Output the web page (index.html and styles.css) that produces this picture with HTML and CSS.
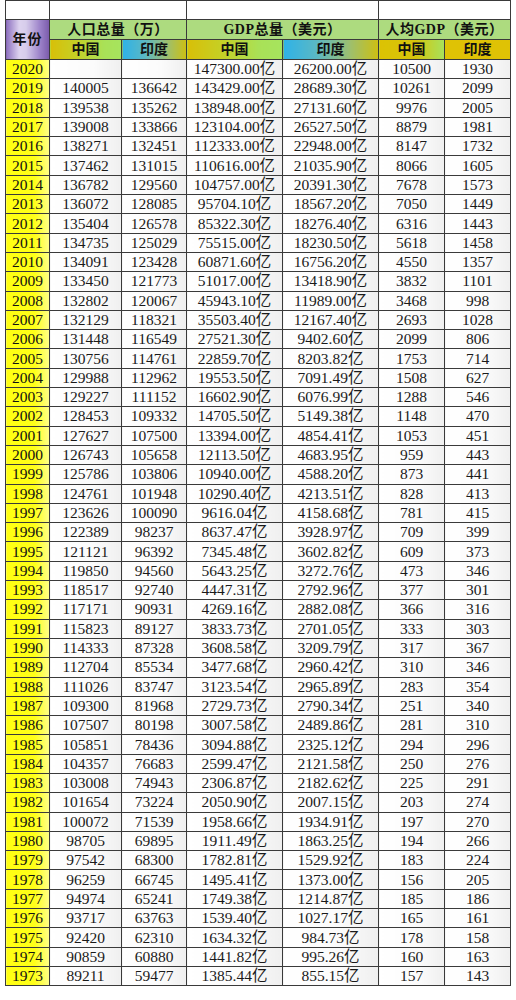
FILE: index.html
```html
<!DOCTYPE html>
<html lang="zh-CN">
<head>
<meta charset="utf-8">
<title>中国与印度人口及GDP对比</title>
<link rel="stylesheet" href="styles.css">
</head>
<body>
<table class="data">
<colgroup>
<col class="c-year"><col class="c-pop1"><col class="c-pop2"><col class="c-gdp"><col class="c-gdp"><col class="c-pc"><col class="c-pc">
</colgroup>
<thead>
<tr class="blank"><td></td><td colspan="2"></td><td colspan="2"></td><td colspan="2"></td></tr>
<tr class="h1"><th rowspan="2" class="year-head">年份</th><th colspan="2" class="grp">人口总量（万）</th><th colspan="2" class="grp">GDP总量（美元）</th><th colspan="2" class="grp">人均GDP（美元）</th></tr>
<tr class="h2"><th class="cn">中国</th><th class="in">印度</th><th class="cn">中国</th><th class="in">印度</th><th class="cn2">中国</th><th class="in2">印度</th></tr>
</thead>
<tbody>
<tr><td class="y">2020</td><td></td><td></td><td>147300.00亿</td><td>26200.00亿</td><td>10500</td><td>1930</td></tr>
<tr><td class="y">2019</td><td>140005</td><td>136642</td><td>143429.00亿</td><td>28689.30亿</td><td>10261</td><td>2099</td></tr>
<tr><td class="y">2018</td><td>139538</td><td>135262</td><td>138948.00亿</td><td>27131.60亿</td><td>9976</td><td>2005</td></tr>
<tr><td class="y">2017</td><td>139008</td><td>133866</td><td>123104.00亿</td><td>26527.50亿</td><td>8879</td><td>1981</td></tr>
<tr><td class="y">2016</td><td>138271</td><td>132451</td><td>112333.00亿</td><td>22948.00亿</td><td>8147</td><td>1732</td></tr>
<tr><td class="y">2015</td><td>137462</td><td>131015</td><td>110616.00亿</td><td>21035.90亿</td><td>8066</td><td>1605</td></tr>
<tr><td class="y">2014</td><td>136782</td><td>129560</td><td>104757.00亿</td><td>20391.30亿</td><td>7678</td><td>1573</td></tr>
<tr><td class="y">2013</td><td>136072</td><td>128085</td><td>95704.10亿</td><td>18567.20亿</td><td>7050</td><td>1449</td></tr>
<tr><td class="y">2012</td><td>135404</td><td>126578</td><td>85322.30亿</td><td>18276.40亿</td><td>6316</td><td>1443</td></tr>
<tr><td class="y">2011</td><td>134735</td><td>125029</td><td>75515.00亿</td><td>18230.50亿</td><td>5618</td><td>1458</td></tr>
<tr><td class="y">2010</td><td>134091</td><td>123428</td><td>60871.60亿</td><td>16756.20亿</td><td>4550</td><td>1357</td></tr>
<tr><td class="y">2009</td><td>133450</td><td>121773</td><td>51017.00亿</td><td>13418.90亿</td><td>3832</td><td>1101</td></tr>
<tr><td class="y">2008</td><td>132802</td><td>120067</td><td>45943.10亿</td><td>11989.00亿</td><td>3468</td><td>998</td></tr>
<tr><td class="y">2007</td><td>132129</td><td>118321</td><td>35503.40亿</td><td>12167.40亿</td><td>2693</td><td>1028</td></tr>
<tr><td class="y">2006</td><td>131448</td><td>116549</td><td>27521.30亿</td><td>9402.60亿</td><td>2099</td><td>806</td></tr>
<tr><td class="y">2005</td><td>130756</td><td>114761</td><td>22859.70亿</td><td>8203.82亿</td><td>1753</td><td>714</td></tr>
<tr><td class="y">2004</td><td>129988</td><td>112962</td><td>19553.50亿</td><td>7091.49亿</td><td>1508</td><td>627</td></tr>
<tr><td class="y">2003</td><td>129227</td><td>111152</td><td>16602.90亿</td><td>6076.99亿</td><td>1288</td><td>546</td></tr>
<tr><td class="y">2002</td><td>128453</td><td>109332</td><td>14705.50亿</td><td>5149.38亿</td><td>1148</td><td>470</td></tr>
<tr><td class="y">2001</td><td>127627</td><td>107500</td><td>13394.00亿</td><td>4854.41亿</td><td>1053</td><td>451</td></tr>
<tr><td class="y">2000</td><td>126743</td><td>105658</td><td>12113.50亿</td><td>4683.95亿</td><td>959</td><td>443</td></tr>
<tr><td class="y">1999</td><td>125786</td><td>103806</td><td>10940.00亿</td><td>4588.20亿</td><td>873</td><td>441</td></tr>
<tr><td class="y">1998</td><td>124761</td><td>101948</td><td>10290.40亿</td><td>4213.51亿</td><td>828</td><td>413</td></tr>
<tr><td class="y">1997</td><td>123626</td><td>100090</td><td>9616.04亿</td><td>4158.68亿</td><td>781</td><td>415</td></tr>
<tr><td class="y">1996</td><td>122389</td><td>98237</td><td>8637.47亿</td><td>3928.97亿</td><td>709</td><td>399</td></tr>
<tr><td class="y">1995</td><td>121121</td><td>96392</td><td>7345.48亿</td><td>3602.82亿</td><td>609</td><td>373</td></tr>
<tr><td class="y">1994</td><td>119850</td><td>94560</td><td>5643.25亿</td><td>3272.76亿</td><td>473</td><td>346</td></tr>
<tr><td class="y">1993</td><td>118517</td><td>92740</td><td>4447.31亿</td><td>2792.96亿</td><td>377</td><td>301</td></tr>
<tr><td class="y">1992</td><td>117171</td><td>90931</td><td>4269.16亿</td><td>2882.08亿</td><td>366</td><td>316</td></tr>
<tr><td class="y">1991</td><td>115823</td><td>89127</td><td>3833.73亿</td><td>2701.05亿</td><td>333</td><td>303</td></tr>
<tr><td class="y">1990</td><td>114333</td><td>87328</td><td>3608.58亿</td><td>3209.79亿</td><td>317</td><td>367</td></tr>
<tr><td class="y">1989</td><td>112704</td><td>85534</td><td>3477.68亿</td><td>2960.42亿</td><td>310</td><td>346</td></tr>
<tr><td class="y">1988</td><td>111026</td><td>83747</td><td>3123.54亿</td><td>2965.89亿</td><td>283</td><td>354</td></tr>
<tr><td class="y">1987</td><td>109300</td><td>81968</td><td>2729.73亿</td><td>2790.34亿</td><td>251</td><td>340</td></tr>
<tr><td class="y">1986</td><td>107507</td><td>80198</td><td>3007.58亿</td><td>2489.86亿</td><td>281</td><td>310</td></tr>
<tr><td class="y">1985</td><td>105851</td><td>78436</td><td>3094.88亿</td><td>2325.12亿</td><td>294</td><td>296</td></tr>
<tr><td class="y">1984</td><td>104357</td><td>76683</td><td>2599.47亿</td><td>2121.58亿</td><td>250</td><td>276</td></tr>
<tr><td class="y">1983</td><td>103008</td><td>74943</td><td>2306.87亿</td><td>2182.62亿</td><td>225</td><td>291</td></tr>
<tr><td class="y">1982</td><td>101654</td><td>73224</td><td>2050.90亿</td><td>2007.15亿</td><td>203</td><td>274</td></tr>
<tr><td class="y">1981</td><td>100072</td><td>71539</td><td>1958.66亿</td><td>1934.91亿</td><td>197</td><td>270</td></tr>
<tr><td class="y">1980</td><td>98705</td><td>69895</td><td>1911.49亿</td><td>1863.25亿</td><td>194</td><td>266</td></tr>
<tr><td class="y">1979</td><td>97542</td><td>68300</td><td>1782.81亿</td><td>1529.92亿</td><td>183</td><td>224</td></tr>
<tr><td class="y">1978</td><td>96259</td><td>66745</td><td>1495.41亿</td><td>1373.00亿</td><td>156</td><td>205</td></tr>
<tr><td class="y">1977</td><td>94974</td><td>65241</td><td>1749.38亿</td><td>1214.87亿</td><td>185</td><td>186</td></tr>
<tr><td class="y">1976</td><td>93717</td><td>63763</td><td>1539.40亿</td><td>1027.17亿</td><td>165</td><td>161</td></tr>
<tr><td class="y">1975</td><td>92420</td><td>62310</td><td>1634.32亿</td><td>984.73亿</td><td>178</td><td>158</td></tr>
<tr><td class="y">1974</td><td>90859</td><td>60880</td><td>1441.82亿</td><td>995.26亿</td><td>160</td><td>163</td></tr>
<tr><td class="y">1973</td><td>89211</td><td>59477</td><td>1385.44亿</td><td>855.15亿</td><td>157</td><td>143</td></tr>
</tbody>
</table>
</body>
</html>
```

FILE: styles.css
```css
html, body {
  margin: 0;
  padding: 0;
  background: #ffffff;
}

body {
  padding-left: 5px;
  font-family: "Liberation Serif", "Noto Sans CJK SC", serif;
}

.data {
  border-collapse: collapse;
  table-layout: fixed;
  width: 506px;
  border: 1.5px solid #1e1e1e;
}

.c-year { width: 44px; }
.c-pop1 { width: 72px; }
.c-pop2 { width: 65px; }
.c-gdp { width: 96px; }
.c-pc { width: 66px; }

.data td,
.data th {
  border: 1px solid #3a3a3a;
  padding: 0;
  text-align: center;
  white-space: nowrap;
  overflow: hidden;
}

.data thead tr.blank td {
  height: 18px;
  background: #ffffff;
}

.data thead tr.h1 th,
.data thead tr.h2 th {
  height: 19px;
  font-family: "Liberation Serif", "Noto Sans CJK SC", serif;
  font-weight: bold;
  font-size: 14px;
  color: #111;
  line-height: 19px;
}

.data th.grp {
  background: #addb7f;
  letter-spacing: 0.5px;
}

.data th.year-head {
  font-family: "Noto Sans CJK SC", sans-serif;
  font-size: 17px;
  letter-spacing: 1px;
  background: linear-gradient(to right, #8f72c0 0%, #ddd3ef 30%, #d7cdeb 45%, #9c82c9 78%, #7a5aab 100%);
}

.data th.cn,
.data th.in,
.data th.cn2,
.data th.in2 {
  font-family: "Noto Sans CJK SC", sans-serif;
}

.data th.cn {
  background: linear-gradient(to right, #d8bf08 0%, #c6cf24 35%, #a9e157 75%, #a6e45e 100%);
}

.data th.in {
  background: linear-gradient(to right, #2eb2e8 0%, #5bb8c4 35%, #9dbf6e 70%, #cdbf12 100%);
}

.data th.cn2 {
  background: linear-gradient(to right, #dcc203 0%, #d6c50a 55%, #b6d842 85%, #a7e25c 100%);
}

.data th.in2 {
  background: #dfc205;
}

.data tbody td {
  height: 18.3px;
  font-size: 15.5px;
  line-height: 18px;
  color: #1a1a1a;
  background: linear-gradient(to right, #ffffff 0%, #fbfbfb 60%, #efefef 100%);
}

.data tbody td.y {
  background: linear-gradient(to right, #ffff12 0%, #ffff18 65%, #ffff8a 100%);
  color: #111;
}
```
